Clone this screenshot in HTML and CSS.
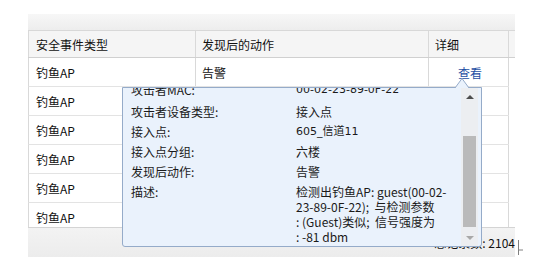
FILE: index.html
```html
<!DOCTYPE html>
<html lang="zh-CN">
<head>
    <meta charset="UTF-8">
    <title>安全事件</title>
    <link rel="stylesheet" href="styles.css">
</head>
<body>
    <div class="grid">
        <div class="grid-top"></div>
        <div class="grid-head">
            <div class="row">
                <div class="cell">安全事件类型</div>
                <div class="cell">发现后的动作</div>
                <div class="cell">详细</div>
            </div>
        </div>
        <div class="grid-body">
            <div class="row">
                <div class="cell">钓鱼AP</div>
                <div class="cell">告警</div>
                <div class="cell link-cell"><a class="link" href="#">查看</a></div>
            </div>
            <div class="row">
                <div class="cell">钓鱼AP</div>
                <div class="cell">告警</div>
                <div class="cell link-cell"><a class="link" href="#">查看</a></div>
            </div>
            <div class="row">
                <div class="cell">钓鱼AP</div>
                <div class="cell">告警</div>
                <div class="cell link-cell"><a class="link" href="#">查看</a></div>
            </div>
            <div class="row">
                <div class="cell">钓鱼AP</div>
                <div class="cell">告警</div>
                <div class="cell link-cell"><a class="link" href="#">查看</a></div>
            </div>
            <div class="row">
                <div class="cell">钓鱼AP</div>
                <div class="cell">告警</div>
                <div class="cell link-cell"><a class="link" href="#">查看</a></div>
            </div>
            <div class="row">
                <div class="cell">钓鱼AP</div>
                <div class="cell">告警</div>
                <div class="cell link-cell"><a class="link" href="#">查看</a></div>
            </div>
        </div>
        <div class="grid-foot">总记录数: 2104</div>

        <svg class="cursor" width="7" height="16" viewBox="0 0 7 16">
            <path d="M1.5 0 V15 M1.5 10 H6" stroke="#808080" fill="none"/>
        </svg>

        <div class="tip">
            <svg class="tip-arrow" width="16" height="11" viewBox="0 0 16 11">
                <path d="M1 11 L8 1.5 L15 11" fill="#eaf2fc" stroke="#95abc9"/>
            </svg>
            <div class="tip-body">
                <div class="tip-list">
                    <div class="tip-row"><span>攻击者MAC:</span><span class="val">00-02-23-89-0F-22</span></div>
                    <div class="tip-row"><span>攻击者设备类型:</span><span>接入点</span></div>
                    <div class="tip-row"><span>接入点:</span><span class="val">605_信道11</span></div>
                    <div class="tip-row"><span>接入点分组:</span><span>六楼</span></div>
                    <div class="tip-row"><span>发现后动作:</span><span>告警</span></div>
                    <div class="tip-row"><span>描述:</span><span>检测出钓鱼AP: guest(00-02-<br>23-89-0F-22); &nbsp;与检测参数<br>: (Guest)类似; &nbsp;信号强度为<br>: -81 dbm</span></div>
                </div>
            </div>
            <div class="tip-scroll">
                <div class="scroll-btn"><span class="arrow-up"></span></div>
                <div class="scroll-track"><div class="scroll-thumb"></div></div>
                <div class="scroll-btn"><span class="arrow-down"></span></div>
            </div>
        </div>
    </div>
</body>
</html>
```

FILE: styles.css
```css
body {
    margin: 0;
    font-family: "Noto Sans CJK SC", sans-serif;
    font-size: 12px;
    color: #111;
    background: #fff;
}
.grid {
    position: relative;
    width: 487px;
    margin: 14px 0 0 28px;
}
.grid-top {
    height: 16px;
    background: linear-gradient(#f7f7f7, #ededed);
    border-bottom: 1px solid #d8d8d8;
}
.grid-head {
    background: #f5f5f5;
    border-bottom: 1px solid #d0d0d0;
}
.grid-head .row {
    height: 26px;
    border-bottom: none;
}
.row {
    display: grid;
    grid-template-columns: 167px 233px 80px;
    width: 480px;
    height: 28px;
    border-left: 1px solid #d9d9d9;
    border-bottom: 1px solid #e3e3e3;
}
.cell {
    display: flex;
    align-items: center;
    padding-left: 6px;
    border-right: 1px solid #d9d9d9;
}
.cell:first-child {
    padding-left: 7px;
}
.link-cell {
    justify-content: center;
    padding-left: 3px;
}
.link {
    color: #1f4fa3;
    text-decoration: none;
}
.grid-body {
    height: 169px;
    overflow: hidden;
}
.grid-foot {
    height: 29px;
    line-height: 29px;
    text-align: right;
    background: linear-gradient(#f3f3f3, #ececec);
    border-top: 1px solid #d4d4d4;
}
.cursor {
    position: absolute;
    left: 489px;
    top: 226px;
}
.tip {
    position: absolute;
    left: 94px;
    top: 73px;
    width: 358px;
    height: 158px;
    display: flex;
    background: #eaf2fc;
    border: 1px solid #95abc9;
    border-radius: 0 0 3px 3px;
}
.tip-arrow {
    position: absolute;
    left: 331px;
    top: -11px;
}
.tip-body {
    flex: 1;
    overflow: hidden;
    padding-left: 8px;
}
.tip-list {
    margin-top: -9px;
}
.tip-row {
    display: grid;
    grid-template-columns: 165px 1fr;
    padding: 3px 0 2px;
    line-height: 15px;
    color: #1a1a1a;
}
.tip-row:first-child {
    padding-bottom: 4px;
}
.val {
    font-family: "DejaVu Sans", "Noto Sans CJK SC", sans-serif;
    font-size: 11px;
}
.tip-scroll {
    width: 17px;
    margin-right: 3px;
    display: flex;
    flex-direction: column;
    background: #eceef1;
}
.scroll-btn {
    height: 17px;
    display: flex;
    align-items: center;
    justify-content: center;
}
.arrow-up {
    border-left: 4px solid transparent;
    border-right: 4px solid transparent;
    border-bottom: 4px solid #4d4d4d;
}
.arrow-down {
    border-left: 4px solid transparent;
    border-right: 4px solid transparent;
    border-top: 4px solid #a8a8a8;
}
.scroll-track {
    flex: 1;
}
.scroll-thumb {
    width: 13px;
    height: 91px;
    margin: 31px auto 0;
    background: #bababa;
}
```
